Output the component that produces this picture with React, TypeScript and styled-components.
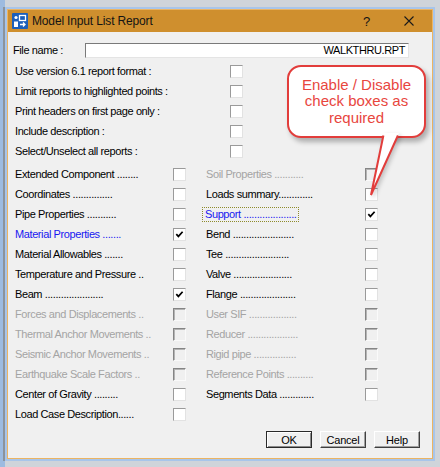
import styled, { createGlobalStyle } from "styled-components";

const GlobalStyle = createGlobalStyle`
  html, body {
    margin: 0;
    padding: 0;
  }
  body {
    width: 440px;
    height: 467px;
    overflow: hidden;
    background: #cfd4da;
    font-family: "Liberation Sans", Arial, sans-serif;
  }
`;

type Tone = "normal" | "blue" | "off";

const toneColor = (t: Tone) =>
  t === "blue" ? "#1818f0" : t === "off" ? "#a4a4a4" : "#000";

const Shell = styled.div`
  box-sizing: border-box;
  width: 440px;
  height: 467px;
  padding: 9px 7px 8px 2px;
  border-left: 5px solid #9dbbe0;
  background: #cfd4da;
`;

const Window = styled.div`
  position: relative;
  box-sizing: border-box;
  height: 450px;
  display: flex;
  flex-direction: column;
  border: 1px solid #ebb463;
  box-shadow: 0 0 0 2px #a8c5ea, -2px 0 0 2px #8c939b;
`;

const TitleBar = styled.div`
  height: 22px;
  display: flex;
  align-items: center;
  padding-left: 4px;
  background: #cf8f2e;
  color: #141414;
  font-size: 12px;
  letter-spacing: -0.15px;
`;

const TitleText = styled.span`
  margin-left: 4px;
`;

const HelpGlyph = styled.span`
  margin-left: auto;
  font-size: 13px;
`;

const CloseGlyph = styled.svg`
  margin: 0 18px 0 34px;
`;

const Content = styled.div`
  flex: 1;
  background: #f0f0f0;
  padding: 8px 0 0 7px;
  font-size: 11px;
  letter-spacing: -0.4px;
  color: #000;
`;

const FileRow = styled.div`
  height: 20px;
  display: flex;
  align-items: center;
  margin-left: -2px;
`;

const FileLabel = styled.span`
  width: 72px;
`;

const FileInput = styled.div`
  box-sizing: border-box;
  width: 324px;
  height: 15px;
  padding-right: 3px;
  border: 1px solid;
  border-color: #7a7a7a #e4e4e4 #e4e4e4 #7a7a7a;
  background: #fff;
  text-align: right;
  line-height: 13px;
`;

const Options = styled.div`
  margin-top: 1px;
`;

const OptionRow = styled.div`
  height: 20px;
  display: flex;
  align-items: center;
`;

const OptionLabel = styled.span`
  width: 215px;
`;

const ReportGrid = styled.div`
  margin-top: 3px;
  display: grid;
  grid-template-columns: 158px 13px 20px 159px 13px;
  grid-auto-rows: 20px;
  align-items: center;
`;

const ReportLabel = styled.span<{ $tone: Tone }>`
  color: ${(p) => toneColor(p.$tone)};
  white-space: nowrap;
`;

const FocusLabel = styled(ReportLabel)`
  justify-self: start;
  margin-left: -4px;
  padding: 0 1px 0 2px;
  line-height: 13px;
  border: 1px dotted #8f8b2c;
`;

const Box = styled.span<{ $off?: boolean }>`
  box-sizing: border-box;
  width: 13px;
  height: 13px;
  display: flex;
  align-items: center;
  justify-content: center;
  border: 1px solid;
  border-color: ${(p) =>
    p.$off ? "#858585 #fafafa #fafafa #858585" : "#9a9a9a #e2e2e2 #e2e2e2 #9a9a9a"};
  box-shadow: ${(p) => (p.$off ? "inset 1px 1px 0 #b4b4b4" : "none")};
  background: ${(p) => (p.$off ? "#f0f0f0" : "#fff")};
`;

const ButtonBar = styled.div`
  margin-top: 7px;
  display: flex;
  justify-content: flex-end;
  gap: 8px;
  padding-right: 12px;
`;

const PushButton = styled.button<{ $default?: boolean }>`
  box-sizing: border-box;
  width: 46px;
  height: 17px;
  padding: 0;
  font-family: inherit;
  font-size: 11px;
  letter-spacing: -0.2px;
  color: #000;
  background: #f0f0f0;
  border: 1px solid;
  border-color: ${(p) => (p.$default ? "#2a2a2a" : "#fff #404040 #404040 #fff")};
  box-shadow: ${(p) =>
    p.$default
      ? "inset 1px 1px 0 #fff, inset -1px -1px 0 #8a8a8a"
      : "inset -1px -1px 0 #a0a0a0"};
`;

const Callout = styled.div`
  position: absolute;
  left: 279px;
  top: 55px;
  box-sizing: border-box;
  width: 139px;
  height: 73px;
  display: flex;
  flex-direction: column;
  justify-content: center;
  align-items: center;
  border: 2px solid #e23d3b;
  border-radius: 14px;
  background: #fff;
  box-shadow: 3px 4px 5px rgba(0, 0, 0, 0.28);
  color: #e8463e;
  font-size: 15px;
  line-height: 16.5px;
  text-align: center;
`;

const CalloutTail = styled.svg`
  position: absolute;
  left: 352px;
  top: 120px;
  filter: drop-shadow(2px 2px 2px rgba(0, 0, 0, 0.2));
`;

type Item = [string, Tone, boolean];

const leftItems: Item[] = [
  ["Extended Component ........", "normal", false],
  ["Coordinates ...............", "normal", false],
  ["Pipe Properties ...........", "normal", false],
  ["Material Properties .......", "blue", true],
  ["Material Allowables .......", "normal", false],
  ["Temperature and Pressure ..", "normal", false],
  ["Beam ......................", "normal", true],
  ["Forces and Displacements ..", "off", false],
  ["Thermal Anchor Movements ..", "off", false],
  ["Seismic Anchor Movements ..", "off", false],
  ["Earthquake Scale Factors ..", "off", false],
  ["Center of Gravity .........", "normal", false],
  ["Load Case Description......", "normal", false],
];

const rightItems: (Item | null)[] = [
  ["Soil Properties ...........", "off", false],
  ["Loads summary.............", "normal", false],
  ["Support ....................", "blue", true],
  ["Bend .......................", "normal", false],
  ["Tee ........................", "normal", false],
  ["Valve ......................", "normal", false],
  ["Flange .....................", "normal", false],
  ["User SIF ..................", "off", false],
  ["Reducer ...................", "off", false],
  ["Rigid pipe ................", "off", false],
  ["Reference Points ..........", "off", false],
  ["Segments Data .............", "normal", false],
  null,
];

const options = [
  "Use version 6.1 report format :",
  "Limit reports to highlighted points :",
  "Print headers on first page only :",
  "Include description :",
  "Select/Unselect all reports :",
];

const Checkbox = ({ checked, off }: { checked?: boolean; off?: boolean }) => (
  <Box $off={off}>
    {checked && (
      <svg width="9" height="9" viewBox="0 0 9 9">
        <path d="M1.3 4.2 L3.4 6.4 L7.6 1.8" fill="none" stroke="#000" strokeWidth="1.7" />
      </svg>
    )}
  </Box>
);

const AppIcon = () => (
  <svg width="16" height="16" viewBox="0 0 16 16">
    <rect width="16" height="16" rx="1" fill="#1c5fba" />
    <rect x="7.5" y="2.5" width="6" height="5" fill="none" stroke="#fff" strokeWidth="1.3" />
    <circle cx="4" cy="4.5" r="1.6" fill="#fff" />
    <path d="M2 14 V8.5 H6 V14 Z" fill="#fff" />
    <path d="M8 11.5 H13 M11 9.5 L13 11.5 L11 13.5" fill="none" stroke="#fff" strokeWidth="1.3" />
  </svg>
);

const ReportCell = ({ item }: { item: Item }) => {
  const [text, tone, checked] = item;
  const Label = text.startsWith("Support") ? FocusLabel : ReportLabel;
  return (
    <>
      <Label $tone={tone}>{text}</Label>
      <Checkbox checked={checked} off={tone === "off"} />
    </>
  );
};

export default function App() {
  return (
    <>
      <GlobalStyle />
      <Shell>
        <Window>
          <TitleBar>
            <AppIcon />
            <TitleText>Model Input List Report</TitleText>
            <HelpGlyph>?</HelpGlyph>
            <CloseGlyph width="10" height="10" viewBox="0 0 10 10">
              <path d="M0.5 0.5 L9.5 9.5 M9.5 0.5 L0.5 9.5" stroke="#1a1a1a" strokeWidth="1.1" />
            </CloseGlyph>
          </TitleBar>
          <Content>
            <FileRow>
              <FileLabel>File name :</FileLabel>
              <FileInput>WALKTHRU.RPT</FileInput>
            </FileRow>
            <Options>
              {options.map((o) => (
                <OptionRow key={o}>
                  <OptionLabel>{o}</OptionLabel>
                  <Checkbox />
                </OptionRow>
              ))}
            </Options>
            <ReportGrid>
              {leftItems.map((l, i) => {
                const r = rightItems[i];
                return (
                  <ReportRow key={l[0]} left={l} right={r} />
                );
              })}
            </ReportGrid>
            <ButtonBar>
              <PushButton $default>OK</PushButton>
              <PushButton>Cancel</PushButton>
              <PushButton>Help</PushButton>
            </ButtonBar>
          </Content>
          <Callout>
            <span>Enable / Disable</span>
            <span>check boxes as</span>
            <span>required</span>
          </Callout>
          <CalloutTail width="45" height="72" viewBox="0 0 45 72">
            <path d="M24 3 L39 3 L11 65 Z" fill="#fff" />
            <path d="M23.4 5.5 L11 65 L37.9 5.5" fill="none" stroke="#e23d3b" strokeWidth="2" strokeLinejoin="miter" />
          </CalloutTail>
        </Window>
      </Shell>
    </>
  );
}

const ReportRow = ({ left, right }: { left: Item; right: Item | null }) => (
  <>
    <ReportCell item={left} />
    <span />
    {right ? <ReportCell item={right} /> : <><span /><span /></>}
  </>
);
